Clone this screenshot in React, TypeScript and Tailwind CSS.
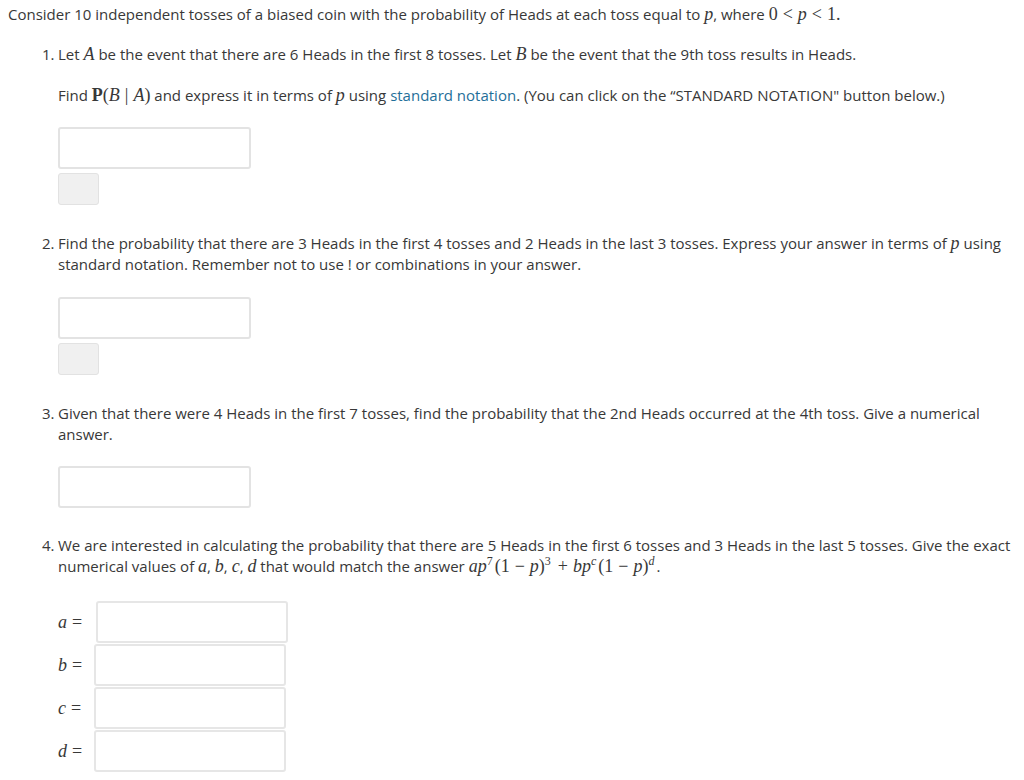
import React from "react";

const serif = "font-['Liberation_Serif','DejaVu_Serif',serif]";

const M = ({ children, className = "" }: { children: React.ReactNode; className?: string }) => (
  <span className={`${serif} text-[18px] leading-none italic ${className}`}>{children}</span>
);
const R = ({ children, className = "" }: { children: React.ReactNode; className?: string }) => (
  <span className={`${serif} text-[18px] leading-none not-italic ${className}`}>{children}</span>
);
const Rel = ({ children }: { children: React.ReactNode }) => (
  <span className={`${serif} mx-[5px] text-[18px] leading-none not-italic`}>{children}</span>
);
const Sup = ({ children, italic }: { children: React.ReactNode; italic?: boolean }) => (
  <span className={`${serif} relative top-[-7px] mr-[2px] inline-block text-[12px] leading-none ${italic ? "italic" : ""}`}>{children}</span>
);

const Input = ({ className = "" }: { className?: string }) => (
  <div className={`h-[42px] w-[193px] rounded-[3px] border-2 border-[#e3e3e3] bg-white ${className}`} />
);
const Btn = () => <div className="mt-[4px] h-[32px] w-[41px] rounded-[3px] border border-[#e2e2e2] bg-[#f0f0f0]" />;

const Item = ({ n, children }: { n: string; children: React.ReactNode }) => (
  <div className="ml-[42px] flex">
    <span className="w-[16px] shrink-0">{n}</span>
    <div className="min-w-0 flex-1">{children}</div>
  </div>
);

const Row = ({ label, first }: { label: string; first?: boolean }) => (
  <div className="flex items-center">
    <span className={`${first ? "w-[38px]" : "w-[36px]"} shrink-0`}>
      <M>{label}</M>
      <Rel>=</Rel>
    </span>
    <div className="h-[42px] w-[192px] rounded-[3px] border-2 border-[#e6e6e6] bg-white" />
  </div>
);

export default function App() {
  return (
    <div className="min-h-[780px] bg-white font-['Open_Sans',sans-serif] text-[15px] leading-[21px] text-[#383838]">
      <p className="pl-[8px] pt-[4px]">
        Consider 10 independent tosses of a biased coin with the probability of Heads at each toss equal to <M>p</M>, where{" "}
        <R>0</R>
        <Rel>&lt;</Rel>
        <M>p</M>
        <Rel>&lt;</Rel>
        <R>1.</R>
      </p>

      <div className="mt-[19px]">
        <Item n="1.">
          <p>
            Let <M>A</M> be the event that there are 6 Heads in the first 8 tosses. Let <M>B</M> be the event that the 9th toss results in Heads.
          </p>
          <p className="mt-[20px]">
            Find <R className="font-bold">P</R>
            <R>(</R>
            <M>B</M>
            <Rel>|</Rel>
            <M>A</M>
            <R>)</R> and express it in terms of <M>p</M> using <span className="text-[#1f6f99]">standard notation</span>. (You can click on the “STANDARD NOTATION" button below.)
          </p>
          <div className="mt-[21px]">
            <Input />
            <Btn />
          </div>
        </Item>
      </div>

      <div className="mt-[28px]">
        <Item n="2.">
          <p className="pr-[20px]">
            Find the probability that there are 3 Heads in the first 4 tosses and 2 Heads in the last 3 tosses. Express your answer in terms of <M>p</M> using standard notation. Remember not to use ! or combinations in your answer.
          </p>
          <div className="mt-[22px]">
            <Input />
            <Btn />
          </div>
        </Item>
      </div>

      <div className="mt-[28px]">
        <Item n="3.">
          <p className="pr-[40px]">
            Given that there were 4 Heads in the first 7 tosses, find the probability that the 2nd Heads occurred at the 4th toss. Give a numerical answer.
          </p>
          <div className="mt-[21px]">
            <Input />
          </div>
        </Item>
      </div>

      <div className="mt-[27px]">
        <Item n="4.">
          <p className="pr-[10px]">
            We are interested in calculating the probability that there are 5 Heads in the first 6 tosses and 3 Heads in the last 5 tosses. Give the exact numerical values of <M>a</M>, <M>b</M>, <M>c</M>, <M>d</M> that would match the answer{" "}
            <M>ap</M>
            <Sup>7</Sup>
            <R>(1</R>
            <Rel>−</Rel>
            <M>p</M>
            <R>)</R>
            <Sup>3</Sup>
            <Rel>+</Rel>
            <M>bp</M>
            <Sup italic>c</Sup>
            <R>(1</R>
            <Rel>−</Rel>
            <M>p</M>
            <R>)</R>
            <Sup italic>d</Sup>.
          </p>
          <div className="mt-[24px] flex flex-col gap-[1px]">
            <Row label="a" first />
            <Row label="b" />
            <Row label="c" />
            <Row label="d" />
          </div>
        </Item>
      </div>
    </div>
  );
}
